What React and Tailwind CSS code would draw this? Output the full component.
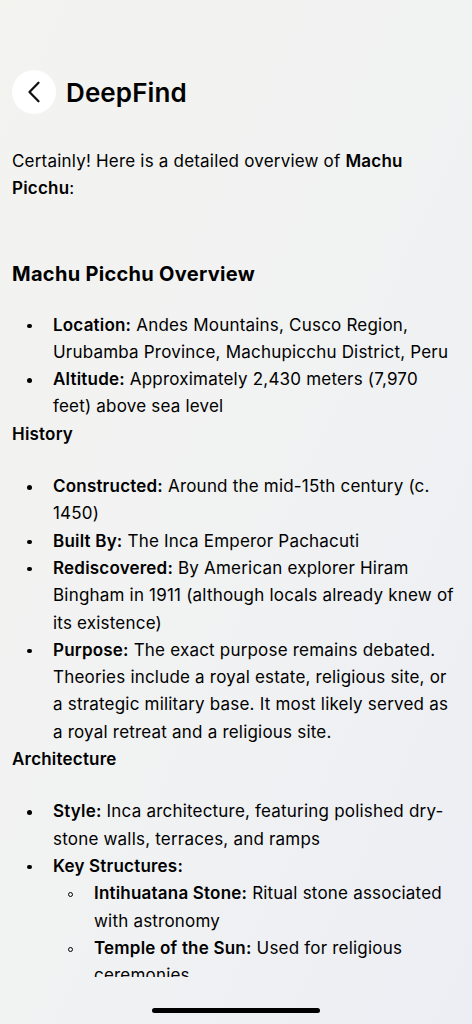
import React from "react";

const Dot = ({ hollow }) => (
  <span className="flex w-[41px] shrink-0 pt-[12px] pl-[15px]">
    {hollow ? (
      <span className="h-[5px] w-[5px] rounded-full border-[1.5px] border-black" />
    ) : (
      <span className="h-[4.5px] w-[4.5px] rounded-full bg-black" />
    )}
  </span>
);

const Item = ({ label, text, hollow, children }) => (
  <li className="flex">
    <Dot hollow={hollow} />
    <div className="min-w-0 flex-1">
      <span className="font-semibold">{label}</span>
      {text && <span> {text}</span>}
      {children}
    </div>
  </li>
);

const Section = ({ title }) => (
  <h3 className="mb-[25px] font-semibold">{title}</h3>
);

export default function App() {
  return (
    <div
      className="relative h-[1024px] w-[472px] overflow-hidden bg-linear-to-br from-[#f3f3f0] via-[#f1f2f2] to-[#eceef4] text-black"
      style={{ fontFamily: "Inter, 'Noto Sans', sans-serif" }}
    >
      {/* Cabecera */}
      <header className="flex items-center gap-[10px] px-3 pt-[70px]">
        <button className="flex h-11 w-11 items-center justify-center rounded-full bg-white">
          <svg width="24" height="24" viewBox="0 0 24 24" fill="none" stroke="#111" strokeWidth="2.3" strokeLinecap="round" strokeLinejoin="round">
            <path d="M16.5 2.8 7.5 12l9 9.2" />
          </svg>
        </button>
        <h1 className="text-[26px] font-semibold tracking-[0.1px]">DeepFind</h1>
      </header>

      {/* Contenido */}
      <main className="h-[863px] overflow-hidden px-3 pt-[34px] text-[17px] leading-[27.3px] tracking-[0.2px]">
        <p>
          Certainly! Here is a detailed overview of <span className="font-semibold">Machu Picchu</span>:
        </p>

        <h2 className="mt-[57px] mb-[24px] text-[20px] leading-[28px] font-bold tracking-[0.3px]">Machu Picchu Overview</h2>

        <ul>
          <Item label="Location:" text="Andes Mountains, Cusco Region, Urubamba Province, Machupicchu District, Peru" />
          <Item label="Altitude:" text="Approximately 2,430 meters (7,970 feet) above sea level" />
        </ul>

        <Section title="History" />
        <ul>
          <Item label="Constructed:" text="Around the mid-15th century (c. 1450)" />
          <Item label="Built By:" text="The Inca Emperor Pachacuti" />
          <Item label="Rediscovered:" text="By American explorer Hiram Bingham in 1911 (although locals already knew of its existence)" />
          <Item
            label="Purpose:"
            text="The exact purpose remains debated. Theories include a royal estate, religious site, or a strategic military base. It most likely served as a royal retreat and a religious site."
          />
        </ul>

        <Section title="Architecture" />
        <ul>
          <Item label="Style:" text="Inca architecture, featuring polished dry-stone walls, terraces, and ramps" />
          <Item label="Key Structures:">
            <ul>
              <Item hollow label="Intihuatana Stone:" text="Ritual stone associated with astronomy" />
              <Item hollow label="Temple of the Sun:" text="Used for religious ceremonies" />
              <Item hollow label="Room of the Three Windows:" text="Part of the main plaza" />
            </ul>
          </Item>
        </ul>
      </main>

      {/* Indicador de inicio */}
      <div className="flex justify-center pt-[31px]">
        <div className="h-[5px] w-[168px] rounded-full bg-black" />
      </div>
    </div>
  );
}
